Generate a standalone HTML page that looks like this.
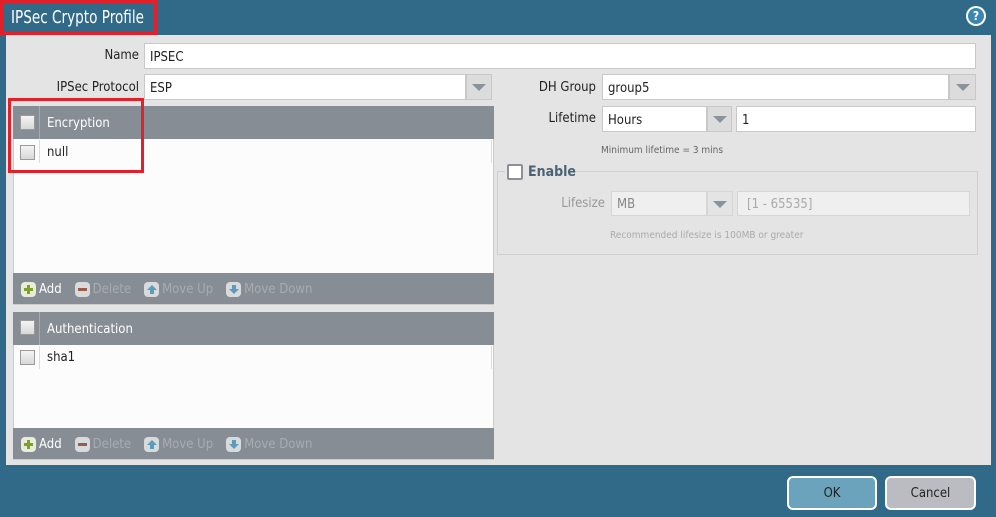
<!DOCTYPE html>
<html><head><meta charset="utf-8"><style>
*{box-sizing:border-box;margin:0;padding:0}
body{width:996px;height:517px;background:#316a88;position:relative;overflow:hidden;font-family:"DejaVu Sans Condensed","Liberation Sans Narrow","Liberation Sans",sans-serif;font-size:13px;color:#222}
.a{position:absolute}
.lbl{position:absolute;text-align:right;font-size:13px;color:#222}
.in{position:absolute;background:#fff;border:1px solid #c8c8c8;padding-left:5px;padding-top:2px;font-size:13px;display:flex;align-items:center}
.btn{position:absolute;background:#dcdcdc;border:1px solid #c8c8c8}
.btn:after{content:"";position:absolute;left:50%;top:50%;margin-left:-7px;margin-top:-3px;border-left:7px solid transparent;border-right:7px solid transparent;border-top:7px solid #8a939c}
.hdr{position:absolute;background:#878d94;color:#fff;font-size:13px}
.cb{position:absolute;width:15px;height:15px;border:1px solid #9a9a9a;background:linear-gradient(#f4f4f4,#d8d8d8)}
.tb{position:absolute;background:#878d94;height:31px;display:flex;align-items:center;font-size:13px;color:#a6acb2;padding-top:2px}
.ic{display:inline-block;width:15px;height:15px;border-radius:4px;background:#d9dadc;margin-right:3px;position:relative;vertical-align:middle}
.tb span{margin-right:13px;display:flex;align-items:center}
</style></head><body>
<div class="a" style="left:0;top:0;width:157px;height:35px;border:3px solid #e3202a"></div>
<div class="a" style="left:11px;top:7px;color:#fff;font-size:18px;transform:scaleX(0.84);transform-origin:0 0;white-space:nowrap">IPSec Crypto Profile</div>
<div class="a" style="left:966px;top:6px;width:20px;height:20px;border-radius:50%;background:#fff;"><div class="a" style="left:2px;top:2px;width:16px;height:16px;border-radius:50%;background:#3a85b3;color:#fff;font-size:12px;font-weight:bold;text-align:center;line-height:16px">?</div></div>

<div class="a" style="left:6px;top:35px;width:985px;height:430px;background:#e4e4e4"></div>

<div class="lbl" style="left:30px;top:48px;width:109px">Name</div>
<div class="in" style="left:144px;top:43px;width:832px;height:26px">IPSEC</div>
<div class="lbl" style="left:20px;top:80px;width:119px">IPSec Protocol</div>
<div class="in" style="left:144px;top:74px;width:322px;height:26px">ESP</div>
<div class="btn" style="left:466px;top:74px;width:26px;height:26px"></div>

<!-- Encryption -->
<div class="a" style="left:13px;top:106px;width:481px;height:199px;background:#fcfcfc;border:1px solid #ccc"></div>
<div class="hdr" style="left:13px;top:106px;width:481px;height:33px"><div class="a" style="left:26px;top:0;height:33px;border-left:1px solid #a5abb1"></div><div class="a" style="left:34px;top:10px">Encryption</div></div>
<div class="cb" style="left:20px;top:115px"></div>
<div class="cb" style="left:20px;top:145px"></div>
<div class="a" style="left:39px;top:140px;height:23px;border-left:1px solid #ddd"></div>
<div class="a" style="left:491px;top:140px;height:23px;border-left:1px solid #ddd"></div>
<div class="a" style="left:47px;top:145px">null</div>
<div class="tb" style="left:13px;top:273px;width:481px;padding-left:8px">
<span style="color:#fff"><i class="ic" style="background:#e9ecd8"><i class="a" style="left:3px;top:6px;width:9px;height:3px;background:#7ea12a"></i><i class="a" style="left:6px;top:3px;width:3px;height:9px;background:#7ea12a"></i></i>Add</span>
<span><i class="ic"><i class="a" style="left:3px;top:6px;width:9px;height:3px;background:#9a5a4a"></i></i>Delete</span>
<span><i class="ic"><i class="a" style="left:3px;top:3px;border-left:5px solid transparent;border-right:5px solid transparent;border-bottom:5px solid #5b9bbd"></i><i class="a" style="left:6px;top:8px;width:4px;height:4px;background:#5b9bbd"></i></i>Move Up</span>
<span><i class="ic"><i class="a" style="left:6px;top:3px;width:4px;height:4px;background:#5b9bbd"></i><i class="a" style="left:3px;top:7px;border-left:5px solid transparent;border-right:5px solid transparent;border-top:5px solid #5b9bbd"></i></i>Move Down</span>
</div>
<div class="a" style="left:8px;top:98px;width:136px;height:75px;border:3px solid #e3202a"></div>

<!-- Authentication -->
<div class="a" style="left:13px;top:312px;width:481px;height:148px;background:#fcfcfc;border:1px solid #ccc"></div>
<div class="hdr" style="left:13px;top:312px;width:481px;height:33px"><div class="a" style="left:26px;top:0;height:33px;border-left:1px solid #a5abb1"></div><div class="a" style="left:34px;top:10px">Authentication</div></div>
<div class="cb" style="left:20px;top:320px"></div>
<div class="cb" style="left:20px;top:350px"></div>
<div class="a" style="left:39px;top:346px;height:23px;border-left:1px solid #ddd"></div>
<div class="a" style="left:491px;top:346px;height:23px;border-left:1px solid #ddd"></div>
<div class="a" style="left:47px;top:350px">sha1</div>
<div class="tb" style="left:13px;top:428px;width:481px;padding-left:8px">
<span style="color:#fff"><i class="ic" style="background:#e9ecd8"><i class="a" style="left:3px;top:6px;width:9px;height:3px;background:#7ea12a"></i><i class="a" style="left:6px;top:3px;width:3px;height:9px;background:#7ea12a"></i></i>Add</span>
<span><i class="ic"><i class="a" style="left:3px;top:6px;width:9px;height:3px;background:#9a5a4a"></i></i>Delete</span>
<span><i class="ic"><i class="a" style="left:3px;top:3px;border-left:5px solid transparent;border-right:5px solid transparent;border-bottom:5px solid #5b9bbd"></i><i class="a" style="left:6px;top:8px;width:4px;height:4px;background:#5b9bbd"></i></i>Move Up</span>
<span><i class="ic"><i class="a" style="left:6px;top:3px;width:4px;height:4px;background:#5b9bbd"></i><i class="a" style="left:3px;top:7px;border-left:5px solid transparent;border-right:5px solid transparent;border-top:5px solid #5b9bbd"></i></i>Move Down</span>
</div>

<!-- right -->
<div class="lbl" style="left:500px;top:80px;width:96px">DH Group</div>
<div class="in" style="left:602px;top:74px;width:347px;height:26px">group5</div>
<div class="btn" style="left:949px;top:74px;width:27px;height:26px"></div>
<div class="lbl" style="left:500px;top:111px;width:96px">Lifetime</div>
<div class="in" style="left:602px;top:106px;width:105px;height:26px">Hours</div>
<div class="btn" style="left:707px;top:106px;width:25px;height:26px"></div>
<div class="in" style="left:736px;top:106px;width:240px;height:26px">1</div>
<div class="a" style="left:601px;top:145px;font-size:10px;color:#666">Minimum lifetime = 3 mins</div>

<div class="a" style="left:497px;top:171px;width:481px;height:84px;border:1px solid #cfcfcf"></div>
<div class="a" style="left:505px;top:162px;width:70px;height:20px;background:#e4e4e4"></div>
<div class="a" style="left:507px;top:164px;width:16px;height:16px;border:2px solid #8f8f99;border-radius:2px;background:#fff"></div>
<div class="a" style="left:528px;top:164px;font-weight:bold;color:#4a6275;font-size:14px">Enable</div>
<div class="lbl" style="left:540px;top:196px;width:65px;color:#999">Lifesize</div>
<div class="in" style="left:611px;top:191px;width:96px;height:25px;background:#efefef;color:#888;border-color:#d6d6d6">MB</div>
<div class="btn" style="left:707px;top:191px;width:26px;height:25px;background:#e4e4e4;border-color:#d6d6d6"></div>
<div class="in" style="left:737px;top:191px;width:233px;height:25px;background:#efefef;color:#aaa;border-color:#d6d6d6;padding-left:9px">[1 - 65535]</div>
<div class="a" style="left:610px;top:230px;font-size:10px;color:#aaa">Recommended lifesize is 100MB or greater</div>

<div class="a" style="left:787px;top:476px;width:90px;height:34px;background:#6aa3bb;border:2px solid #fff;border-radius:6px;text-align:center;line-height:32px;font-size:13px">OK</div>
<div class="a" style="left:885px;top:476px;width:91px;height:34px;background:#babcc2;border:2px solid #fff;border-radius:6px;text-align:center;line-height:32px;font-size:13px">Cancel</div>
</body></html>
